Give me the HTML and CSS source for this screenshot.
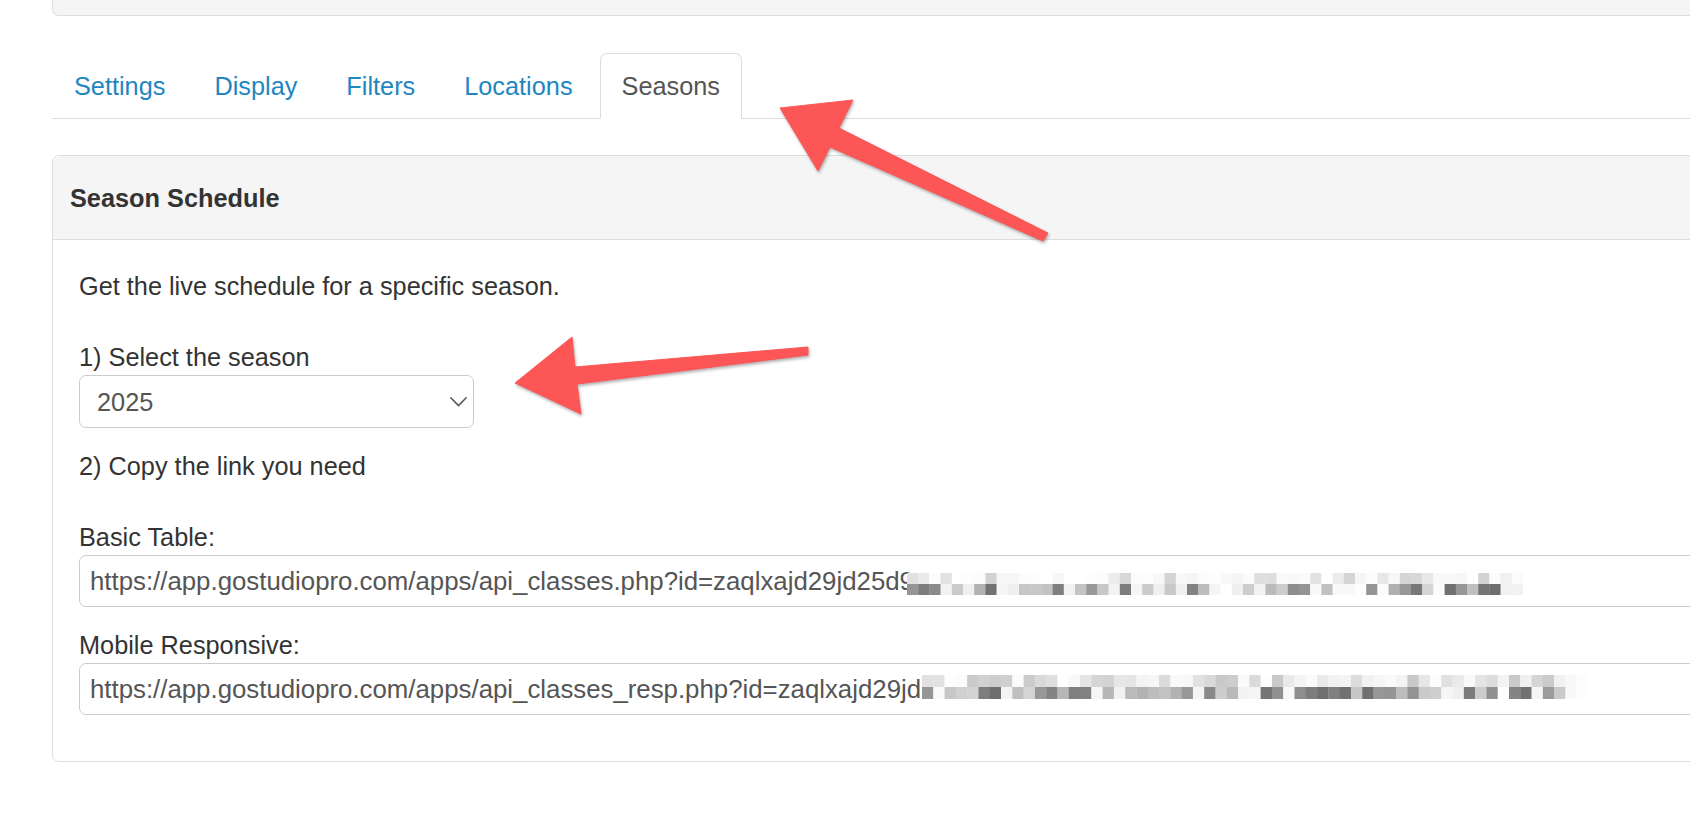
FILE: index.html
```html
<!DOCTYPE html>
<html lang="en">
<head>
<meta charset="utf-8">
<title>Seasons</title>
<link rel="stylesheet" href="styles.css">
</head>
<body>
<div class="page">
  <div class="top-panel"></div>

  <ul class="tabs">
    <li><a href="#">Settings</a></li>
    <li><a href="#">Display</a></li>
    <li><a href="#">Filters</a></li>
    <li><a href="#">Locations</a></li>
    <li class="active"><a href="#">Seasons</a></li>
  </ul>

  <div class="panel">
    <div class="panel-heading">Season Schedule</div>
    <div class="panel-body">
      <p class="intro">Get the live schedule for a specific season.</p>

      <label class="field-label" for="season">1) Select the season</label>
      <div class="select-wrap">
        <select id="season" class="select">
          <option>2025</option>
          <option>2024</option>
          <option>2023</option>
        </select>
        <svg class="chevron" width="17" height="10" viewBox="0 0 17 10" aria-hidden="true">
          <polyline points="0.8,0.8 8.5,8.6 16.2,0.8" fill="none" stroke="#555" stroke-width="1.5" stroke-linecap="round" stroke-linejoin="round"/>
        </svg>
      </div>

      <p class="step">2) Copy the link you need</p>

      <label class="field-label" for="basic">Basic Table:</label>
      <div class="input-wrap first">
        <input id="basic" class="input" type="text" value="https://app.gostudiopro.com/apps/api_classes.php?id=zaqlxajd29jd25d9" readonly>
        <svg class="mosaic m1" data-cols="55" data-seed="17" data-mode="a" width="616" height="22" aria-hidden="true"></svg>
      </div>

      <label class="field-label" for="resp">Mobile Responsive:</label>
      <div class="input-wrap">
        <input id="resp" class="input" type="text" value="https://app.gostudiopro.com/apps/api_classes_resp.php?id=zaqlxajd29jd" readonly>
        <svg class="mosaic m2" data-cols="59" data-seed="91" data-mode="b" width="666" height="24" aria-hidden="true"></svg>
      </div>
    </div>
  </div>
</div>

<svg class="arrows" width="1690" height="832" viewBox="0 0 1690 832" aria-hidden="true">
  <polygon class="arrow" points="780,108 853,100 839,128 1048,233 1043,241 830,147 818,171"/>
  <polygon class="arrow" points="515,383 572,337 575,367 808,347 808,355 577,384 581,414"/>
</svg>

<script src="script.js"></script>
</body>
</html>
```

FILE: styles.css
```css
html, body {
  margin: 0;
  padding: 0;
}

body {
  width: 1690px;
  height: 832px;
  overflow: hidden;
  position: relative;
  background: #fff;
  font-family: "Liberation Sans", Arial, Helvetica, sans-serif;
  font-size: 25.3px;
  line-height: 36px;
  color: #333;
}

.page {
  margin-left: 52px;
  width: 1720px;
}

.top-panel {
  height: 15px;
  background: #f5f5f5;
  border: 1px solid #ddd;
  border-top: none;
  border-radius: 0 0 0 7px;
}

.tabs {
  list-style: none;
  margin: 37px 0 0;
  padding: 0;
  display: flex;
  border-bottom: 1px solid #ddd;
}

.tabs li {
  margin-bottom: -1px;
}

.tabs a {
  display: block;
  padding: 14px 21px;
  margin-right: 5px;
  line-height: 36px;
  border: 1px solid transparent;
  border-radius: 7px 7px 0 0;
  color: #1f86c1;
  text-decoration: none;
}

.tabs .active a {
  color: #555;
  background: #fff;
  border-color: #ddd #ddd transparent;
}

.panel {
  margin-top: 36px;
  border: 1px solid #ddd;
  border-radius: 7px;
  background: #fff;
}

.panel-heading {
  background: #f5f5f5;
  padding: 24px 17px 23px;
  border-bottom: 1px solid #ddd;
  border-radius: 7px 7px 0 0;
  font-weight: bold;
  color: #333;
}

.panel-body {
  padding: 28px 26px 46px;
}

.intro {
  margin: 0 0 35px;
}

.step {
  margin: 0 0 35px;
}

.field-label {
  display: block;
}

.select-wrap {
  position: relative;
  width: 395px;
  margin-bottom: 20px;
}

.select {
  display: block;
  width: 395px;
  height: 53px;
  box-sizing: border-box;
  padding: 0 40px 0 17px;
  -webkit-appearance: none;
  appearance: none;
  background: #fff;
  border: 1px solid #ccc;
  border-radius: 7px;
  font-family: inherit;
  font-size: 25.3px;
  color: #555;
}

.chevron {
  position: absolute;
  right: 7px;
  top: 22px;
}

.input-wrap {
  position: relative;
}

.input-wrap.first {
  margin-bottom: 20px;
}

.input {
  display: block;
  width: 100%;
  height: 52px;
  box-sizing: border-box;
  padding: 0 10px;
  border: 1px solid #ccc;
  border-radius: 7px;
  background: #fff;
  font-family: inherit;
  font-size: 25.8px;
  color: #555;
}

.mosaic {
  position: absolute;
}

.mosaic.m1 {
  left: 828px;
  top: 18px;
}

.mosaic.m2 {
  left: 843px;
  top: 12px;
}

.arrows {
  position: absolute;
  left: 0;
  top: 0;
  pointer-events: none;
}

.arrow {
  fill: #fd5656;
  stroke: #fd5656;
  stroke-width: 1;
  stroke-linejoin: round;
  filter: drop-shadow(1px 2px 1.5px rgba(0, 0, 0, 0.3));
}
```

FILE: script.js
```javascript
(function () {
  var NS = "http://www.w3.org/2000/svg";
  function rng(seed) {
    var s = seed;
    return function () {
      s = (s * 16807) % 2147483647;
      return s / 2147483647;
    };
  }
  function grey(v) {
    var h = Math.round(v).toString(16);
    if (h.length < 2) h = "0" + h;
    return "#" + h + h + h;
  }
  var svgs = document.querySelectorAll(".mosaic");
  for (var k = 0; k < svgs.length; k++) {
    var svg = svgs[k];
    var cols = parseInt(svg.getAttribute("data-cols"), 10);
    var r = rng(parseInt(svg.getAttribute("data-seed"), 10));
    var mode = svg.getAttribute("data-mode");
    var w = parseFloat(svg.getAttribute("width")) / cols;
    var h = parseFloat(svg.getAttribute("height")) / 2;
    for (var row = 0; row < 2; row++) {
      for (var c = 0; c < cols; c++) {
        var x = r();
        var v;
        if (row === 0) {
          if (mode === "a") {
            v = x < 0.7 ? 245 + r() * 10 : 210 + r() * 30;
          } else {
            v = x < 0.5 ? 240 + r() * 15 : 200 + r() * 35;
          }
        } else {
          if (x < 0.3) v = 238 + r() * 17;
          else if (x < 0.6) v = 175 + r() * 40;
          else v = 110 + r() * 45;
        }
        if (c === 0) v = row === 0 ? 225 : 150;
        if (c > cols - 3) v = 240 + r() * 15;
        var rect = document.createElementNS(NS, "rect");
        rect.setAttribute("x", (c * w).toFixed(2));
        rect.setAttribute("y", (row * h).toFixed(2));
        rect.setAttribute("width", (w + 0.3).toFixed(2));
        rect.setAttribute("height", h.toFixed(2));
        rect.setAttribute("fill", grey(v));
        svg.appendChild(rect);
      }
    }
  }
})();
```
